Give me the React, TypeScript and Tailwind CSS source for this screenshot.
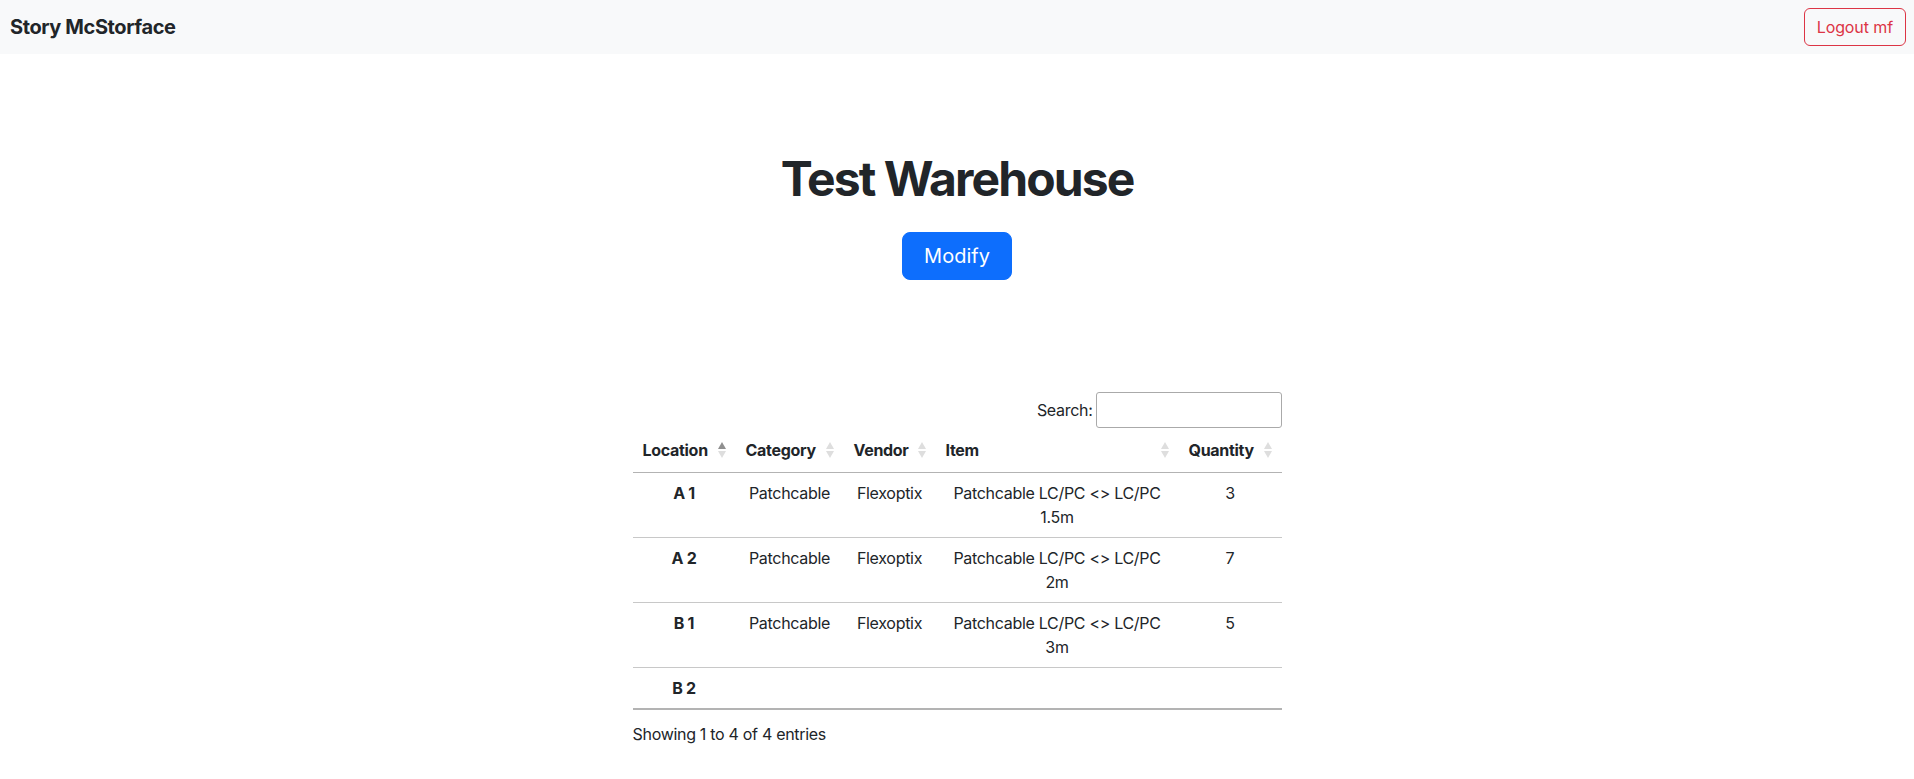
import React from "react";

function SortIcon({ active }: { active?: boolean }) {
  return (
    <svg
      width="8"
      height="16"
      viewBox="0 0 8 16"
      className="absolute right-[10px] top-1/2 -translate-y-1/2"
    >
      <polygon points="4,0 8,7 0,7" fill={active ? "#8f8f8f" : "#dedede"} />
      <polygon points="0,9 8,9 4,16" fill="#dedede" />
    </svg>
  );
}

const rows = [
  { loc: "A 1", cat: "Patchcable", vendor: "Flexoptix", item: "Patchcable LC/PC <> LC/PC 1.5m", qty: "3" },
  { loc: "A 2", cat: "Patchcable", vendor: "Flexoptix", item: "Patchcable LC/PC <> LC/PC 2m", qty: "7" },
  { loc: "B 1", cat: "Patchcable", vendor: "Flexoptix", item: "Patchcable LC/PC <> LC/PC 3m", qty: "5" },
  { loc: "B 2", cat: "", vendor: "", item: "", qty: "" },
];

export default function App() {
  return (
    <div className="min-h-screen bg-white font-['Inter',sans-serif] text-[#212529] text-base leading-6 tracking-[-0.3px]">
      <nav className="h-[54px] bg-[#f8f9fa] flex items-center justify-between pl-[8px] pr-[8px]">
        <span className="text-[20px] font-bold leading-[30px] tracking-[-0.4px] pl-[2px]">Story McStorface</span>
        <button className="border border-[#dc3545] text-[#dc3545] rounded-[6px] px-3 py-[6px] text-base leading-6 bg-transparent tracking-[-0.1px]">
          Logout mf
        </button>
      </nav>
      <div className="flex flex-col items-center">
        <h1 className="mt-[96px] text-[48px] font-bold leading-[1.2] tracking-[-1.9px]">Test Warehouse</h1>
        <button className="mt-6 bg-[#0d6efd] border border-[#0d6efd] text-white text-[20px] leading-[30px] px-[21px] py-2 rounded-lg tracking-[0px]">
          Modify
        </button>
        <div className="mt-[112px] w-[649px]">
          <div className="flex justify-end items-center">
            <label className="text-base leading-6">Search:</label>
            <input
              type="search"
              className="ml-[3px] w-[186px] h-[36px] px-[5px] border border-[#aaaaaa] rounded-[3px] bg-transparent outline-none"
            />
          </div>
          <table className="w-[649px] table-fixed border-collapse">
            <colgroup>
              <col className="w-[103px]" />
              <col className="w-[108px]" />
              <col className="w-[92px]" />
              <col className="w-[243px]" />
              <col className="w-[103px]" />
            </colgroup>
            <thead>
              <tr>
                <th className="relative text-left font-bold pl-[10px] pr-[26px] py-[10px] border-b border-[#b3b3b3] whitespace-nowrap">
                  Location
                  <SortIcon active />
                </th>
                <th className="relative text-left font-bold pl-[10px] pr-[26px] py-[10px] border-b border-[#b3b3b3] whitespace-nowrap">
                  Category
                  <SortIcon />
                </th>
                <th className="relative text-left font-bold pl-[10px] pr-[26px] py-[10px] border-b border-[#b3b3b3] whitespace-nowrap">
                  Vendor
                  <SortIcon />
                </th>
                <th className="relative text-left font-bold pl-[10px] pr-[26px] py-[10px] border-b border-[#b3b3b3] whitespace-nowrap">
                  Item
                  <SortIcon />
                </th>
                <th className="relative text-left font-bold pl-[10px] pr-[26px] py-[10px] border-b border-[#b3b3b3] whitespace-nowrap">
                  Quantity
                  <SortIcon />
                </th>
              </tr>
            </thead>
            <tbody>
              {rows.map((r, i) => {
                const top = i === 0 ? "" : "border-t border-t-[#c8c8c8]";
                const bottom = i === rows.length - 1 ? "border-b-2 border-b-[#b3b3b3]" : "";
                const cell = `px-[10px] py-2 text-center align-top ${top} ${bottom}`;
                return (
                  <tr key={r.loc}>
                    <th className={`${cell} font-bold`}>{r.loc}</th>
                    <td className={cell}>{r.cat}</td>
                    <td className={cell}>{r.vendor}</td>
                    <td className={cell}>{r.item}</td>
                    <td className={cell}>{r.qty}</td>
                  </tr>
                );
              })}
            </tbody>
          </table>
          <div className="pt-3 text-base leading-6">Showing 1 to 4 of 4 entries</div>
        </div>
      </div>
    </div>
  );
}
